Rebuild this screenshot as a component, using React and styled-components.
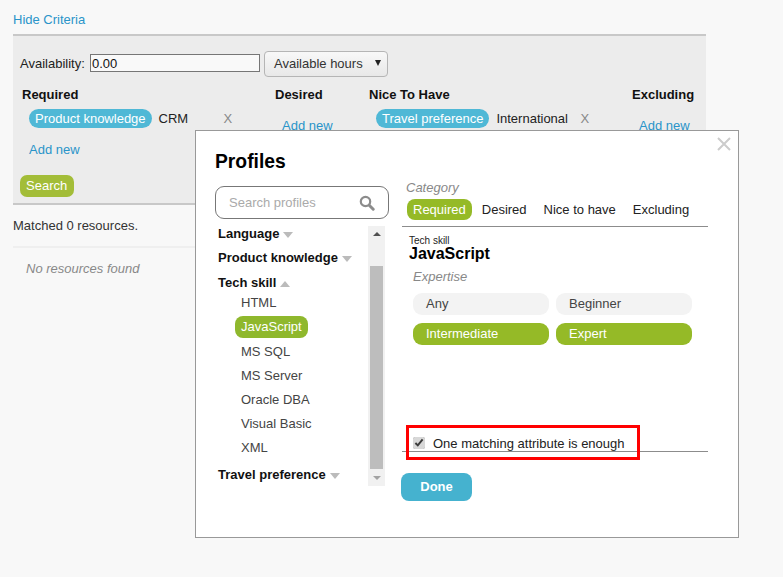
import React from "react";
import styled, { createGlobalStyle } from "styled-components";

const Global = createGlobalStyle`
  html, body { margin: 0; padding: 0; background: #f8f8f8; }
  body { font-family: "Liberation Sans", Arial, sans-serif; font-size: 13px; color: #222; }
`;

const Page = styled.div`
  position: relative;
  width: 783px;
  height: 577px;
  overflow: hidden;
  padding: 11px 77px 0 13px;
  box-sizing: border-box;
`;
const TextLink = styled.a`
  color: #2a94c9;
  font-size: 13px;
  line-height: 17px;
  display: block;
`;
const CriteriaPanel = styled.section`
  margin-top: 6px;
  height: 171px;
  box-sizing: border-box;
  background: #ececec;
  border-top: 2px solid #c8c8c8;
  border-bottom: 2px solid #c8c8c8;
  padding: 15px 7px 0;
`;
const AvailabilityRow = styled.div`
  display: flex;
  align-items: center;
  gap: 4px;
  height: 26px;
`;
const Label = styled.span`
  font-size: 13px;
  color: #222;
  width: 66px;
  padding-bottom: 2px;
`;
const NumberInput = styled.div`
  align-self: flex-start;
  margin-top: 3px;
  width: 170px;
  height: 18px;
  box-sizing: border-box;
  border: 1px solid #767676;
  background: #f9f9f9;
  font-size: 13px;
  line-height: 18px;
  padding-left: 1px;
  color: #111;
`;
const SelectBox = styled.div`
  width: 124px;
  height: 26px;
  box-sizing: border-box;
  border: 1px solid #b5b5b5;
  border-radius: 4px;
  background: linear-gradient(#f8f8f8, #e8e8e8);
  display: flex;
  align-items: center;
  justify-content: space-between;
  padding: 0 6px 2px 9px;
  font-size: 13px;
  color: #333;
`;
const Caret = styled.span`
  width: 0;
  height: 0;
  border-left: 3px solid transparent;
  border-right: 3px solid transparent;
  border-top: 6px solid #222;
`;
const Columns = styled.div`
  display: grid;
  grid-template-columns: 253px 94px 263px auto;
  margin: 9px 0 0 2px;
`;
const Column = styled.div`
  display: flex;
  flex-direction: column;
  align-items: flex-start;
`;
const ColumnHead = styled.div`
  font-weight: bold;
  font-size: 13px;
  line-height: 17px;
  color: #111;
  margin-bottom: ${(p) => p.$gap}px;
`;
const TagRow = styled.div`
  display: flex;
  align-items: center;
  margin-left: ${(p) => p.$indent}px;
  height: 19px;
`;
const Tag = styled.span`
  background: #4fb8d6;
  color: #fff;
  border-radius: 10px;
  height: 19px;
  line-height: 19px;
  padding: 0 6px;
  font-size: 13px;
`;
const TagValue = styled.span`
  margin-left: 7px;
  width: ${(p) => p.$w}px;
  color: #222;
  font-size: 13px;
`;
const Remove = styled.span`
  color: #888;
  font-size: 13px;
`;
const AddLink = styled(TextLink)`
  margin-left: ${(p) => p.$indent}px;
  margin-top: ${(p) => p.$top}px;
`;
const GreenButton = styled.div`
  display: inline-block;
  background: #a3bd38;
  color: #fff;
  border-radius: 7px;
  height: 22px;
  line-height: 21px;
  padding: 0 7px 0 6px;
  font-size: 13px;
  margin: 17px 0 0 -2px;
`;
const Matched = styled.div`
  font-size: 13px;
  line-height: 17px;
  color: #333;
  padding: 12px 0 12px;
  border-bottom: 2px solid #efefef;
`;
const Empty = styled.div`
  font-style: italic;
  color: #888;
  font-size: 13px;
  line-height: 17px;
  padding: 12px 0 0 13px;
`;

const Modal = styled.div`
  position: absolute;
  left: 195px;
  top: 130px;
  width: 544px;
  height: 408px;
  box-sizing: border-box;
  background: #fff;
  border: 1px solid #999;
  display: grid;
  grid-template-columns: 187px 306px;
  padding: 0 0 0 19px;
`;
const CloseMark = styled.svg`
  position: absolute;
  top: 6px;
  right: 7px;
`;
const LeftPane = styled.div`
  display: flex;
  flex-direction: column;
`;
const Title = styled.h2`
  margin: 19px 0 0 0;
  font-size: 19.3px;
  line-height: 24px;
  font-weight: bold;
  color: #000;
`;
const SearchField = styled.div`
  margin-top: 12px;
  width: 174px;
  height: 33px;
  box-sizing: border-box;
  border: 1px solid #777;
  border-radius: 9px;
  display: flex;
  align-items: center;
  justify-content: space-between;
  padding: 0 13px 0 13px;
  color: #aaa;
  font-size: 13px;
`;
const ListWrap = styled.div`
  display: grid;
  grid-template-columns: 150px 17px;
  margin: 7px 0 0 3px;
`;
const List = styled.div`
  display: flex;
  flex-direction: column;
  margin-top: -1px;
`;
const Group = styled.div`
  font-weight: bold;
  font-size: 13px;
  line-height: 17px;
  color: #111;
  display: flex;
  align-items: center;
  margin-top: ${(p) => p.$top || 0}px;
  margin-bottom: ${(p) => p.$gap}px;
`;
const Tri = styled.span`
  margin-left: 4px;
  margin-top: 2px;
  width: 0;
  height: 0;
  border-left: 5px solid transparent;
  border-right: 5px solid transparent;
  ${(p) => (p.$up ? "border-bottom: 6px solid #bbb;" : "border-top: 6px solid #bbb;")}
`;
const Item = styled.div`
  font-size: 13px;
  line-height: 17px;
  color: #444;
  margin-left: 23px;
  margin-bottom: 7px;
`;
const ActiveItem = styled.div`
  align-self: flex-start;
  background: #8fb82d;
  color: #fff;
  border-radius: 8px;
  font-size: 13px;
  height: 22px;
  line-height: 22px;
  padding: 0 6px;
  margin: -2px 0 5px 17px;
`;
const Scrollbar = styled.div`
  width: 17px;
  height: 260px;
  background: #f1f1f1;
  display: flex;
  flex-direction: column;
  align-items: center;
`;
const ScrollArrow = styled.span`
  width: 0;
  height: 0;
  margin: 6px 0;
  border-left: 4px solid transparent;
  border-right: 4px solid transparent;
  ${(p) => (p.$up ? "border-bottom: 4px solid #505050;" : "border-top: 4px solid #a3a3a3;")}
`;
const Thumb = styled.div`
  flex: 1;
  width: 13px;
  background: #bdbdbd;
  margin-top: 24px;
  margin-bottom: 1px;
`;
const RightPane = styled.div`
  display: flex;
  flex-direction: column;
  padding-top: 48px;
`;
const CategoryBlock = styled.div`
  border-bottom: 1px solid #8c8c8c;
  padding: 0 0 6px 4px;
`;
const Caption = styled.div`
  font-style: italic;
  color: #888;
  font-size: 13px;
  line-height: 17px;
`;
const Tabs = styled.div`
  display: flex;
  align-items: center;
  margin: 2px 0 0 1px;
  height: 22px;
`;
const Tab = styled.span`
  font-size: 13px;
  color: #222;
  margin-right: ${(p) => p.$mr}px;
  ${(p) =>
    p.$active &&
    `background:#95ba27;color:#fff;border-radius:8px;height:21px;line-height:21px;padding:0 6px;`}
`;
const Detail = styled.div`
  padding: 9px 0 0 7px;
  flex: 1;
  min-height: 0;
`;
const SmallLabel = styled.div`
  font-size: 10px;
  line-height: 9px;
  color: #222;
`;
const SkillName = styled.div`
  font-size: 16px;
  line-height: 17px;
  font-weight: bold;
  color: #000;
`;
const ExpertiseCaption = styled(Caption)`
  margin: 6px 0 0 4px;
`;
const LevelGrid = styled.div`
  display: grid;
  grid-template-columns: 136px 136px;
  column-gap: 7px;
  row-gap: 8px;
  margin: 8px 0 0 4px;
`;
const Level = styled.div`
  height: 22px;
  line-height: 22px;
  border-radius: 9px;
  padding-left: 13px;
  font-size: 13px;
  background: ${(p) => (p.$on ? "#95ba27" : "#f3f3f3")};
  color: ${(p) => (p.$on ? "#fff" : "#444")};
`;
const CheckRow = styled.div`
  position: relative;
  display: flex;
  align-items: center;
  height: 16px;
  padding: 9px 0 0 11px;
  border-bottom: 1px solid #8c8c8c;
`;
const CheckBox = styled.input`
  margin: 0 8px 0 0;
  width: 12px;
  height: 12px;
  accent-color: #d8d8d8;
`;
const CheckText = styled.span`
  font-size: 13px;
  color: #222;
`;
const Highlight = styled.div`
  position: absolute;
  left: 4px;
  top: -1px;
  width: 234px;
  height: 35px;
  box-sizing: border-box;
  border: 3px solid #f00;
`;
const Done = styled.div`
  margin: 21px 0 36px -1px;
  width: 71px;
  height: 28px;
  line-height: 27px;
  border-radius: 8px;
  background: #45b2cf;
  color: #fff;
  font-weight: bold;
  font-size: 13px;
  text-align: center;
`;

export default function App() {
  return (
    <Page>
      <Global />
      <TextLink>Hide Criteria</TextLink>
      <CriteriaPanel>
        <AvailabilityRow>
          <Label>Availability:</Label>
          <NumberInput>0.00</NumberInput>
          <SelectBox>
            Available hours <Caret />
          </SelectBox>
        </AvailabilityRow>
        <Columns>
          <Column>
            <ColumnHead $gap={6}>Required</ColumnHead>
            <TagRow $indent={7}>
              <Tag>Product knowledge</Tag>
              <TagValue $w={65}>CRM</TagValue>
              <Remove>X</Remove>
            </TagRow>
            <AddLink $indent={7} $top={13}>Add new</AddLink>
            <GreenButton>Search</GreenButton>
          </Column>
          <Column>
            <ColumnHead $gap={0}>Desired</ColumnHead>
            <AddLink $indent={7} $top={14}>Add new</AddLink>
          </Column>
          <Column>
            <ColumnHead $gap={6}>Nice To Have</ColumnHead>
            <TagRow $indent={7}>
              <Tag>Travel preference</Tag>
              <TagValue $w={84}>International</TagValue>
              <Remove>X</Remove>
            </TagRow>
          </Column>
          <Column>
            <ColumnHead $gap={0}>Excluding</ColumnHead>
            <AddLink $indent={7} $top={14}>Add new</AddLink>
          </Column>
        </Columns>
      </CriteriaPanel>
      <Matched>Matched 0 resources.</Matched>
      <Empty>No resources found</Empty>

      <Modal>
        <CloseMark width="14" height="14" viewBox="0 0 14 14">
          <path d="M1 1 L13 13 M13 1 L1 13" stroke="#ccc" strokeWidth="2" fill="none" />
        </CloseMark>
        <LeftPane>
          <Title>Profiles</Title>
          <SearchField>
            Search profiles
            <svg width="16" height="16" viewBox="0 0 16 16">
              <circle cx="6.5" cy="6.5" r="4.7" stroke="#8c8c8c" strokeWidth="2.2" fill="none" />
              <path d="M10.2 10.2 L14.2 14.2" stroke="#8c8c8c" strokeWidth="3" strokeLinecap="round" />
            </svg>
          </SearchField>
          <ListWrap>
            <List>
              <Group $gap={7}>Language<Tri /></Group>
              <Group $gap={8}>Product knowledge<Tri /></Group>
              <Group $gap={3}>Tech skill<Tri $up /></Group>
              <Item>HTML</Item>
              <ActiveItem>JavaScript</ActiveItem>
              <Item>MS SQL</Item>
              <Item>MS Server</Item>
              <Item>Oracle DBA</Item>
              <Item>Visual Basic</Item>
              <Item>XML</Item>
              <Group $gap={0} $top={3}>Travel preference<Tri /></Group>
            </List>
            <Scrollbar>
              <ScrollArrow $up />
              <Thumb />
              <ScrollArrow />
            </Scrollbar>
          </ListWrap>
        </LeftPane>
        <RightPane>
          <CategoryBlock>
            <Caption>Category</Caption>
            <Tabs>
              <Tab $active $mr={10}>Required</Tab>
              <Tab $mr={17}>Desired</Tab>
              <Tab $mr={17}>Nice to have</Tab>
              <Tab $mr={0}>Excluding</Tab>
            </Tabs>
          </CategoryBlock>
          <Detail>
            <SmallLabel>Tech skill</SmallLabel>
            <SkillName>JavaScript</SkillName>
            <ExpertiseCaption>Expertise</ExpertiseCaption>
            <LevelGrid>
              <Level>Any</Level>
              <Level>Beginner</Level>
              <Level $on>Intermediate</Level>
              <Level $on>Expert</Level>
            </LevelGrid>
          </Detail>
          <CheckRow>
            <CheckBox type="checkbox" defaultChecked />
            <CheckText>One matching attribute is enough</CheckText>
            <Highlight />
          </CheckRow>
          <Done>Done</Done>
        </RightPane>
      </Modal>
    </Page>
  );
}
